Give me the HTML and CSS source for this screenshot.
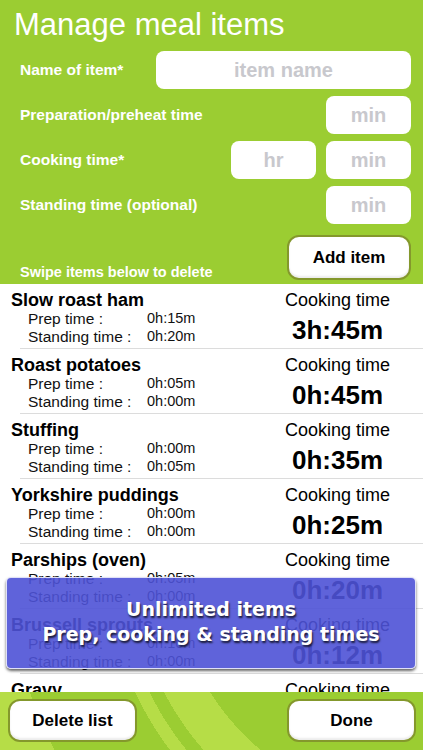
FILE: index.html
```html
<!DOCTYPE html>
<html lang="en">
<head>
  <meta charset="UTF-8">
  <meta name="viewport" content="width=device-width, initial-scale=1.0">
  <title>Manage meal items</title>
  <link rel="stylesheet" href="styles.css">
</head>
<body>
  <div class="app">
    <div class="form">
      <h1 class="title">Manage meal items</h1>

      <div class="row">
        <label class="label" for="name">Name of item*</label>
        <input class="field field-wide" id="name" type="text" placeholder="item name">
      </div>
      <div class="row">
        <label class="label" for="prep">Preparation/preheat time</label>
        <input class="field" id="prep" type="text" placeholder="min">
      </div>
      <div class="row">
        <label class="label" for="cookhr">Cooking time*</label>
        <input class="field" id="cookhr" type="text" placeholder="hr">
        <input class="field" id="cookmin" type="text" placeholder="min">
      </div>
      <div class="row">
        <label class="label" for="stand">Standing time (optional)</label>
        <input class="field" id="stand" type="text" placeholder="min">
      </div>

      <div class="row-add">
        <span class="hint">Swipe items below to delete</span>
        <button class="btn btn-add">Add item</button>
      </div>
    </div>

    <ul class="list">
      <li class="item">
        <div class="info">
          <div class="name">Slow roast ham</div>
          <div class="detail"><span>Prep time :</span><span>0h:15m</span></div>
          <div class="detail"><span>Standing time :</span><span>0h:20m</span></div>
        </div>
        <div class="cook">
          <div class="cook-label">Cooking time</div>
          <div class="cook-time">3h:45m</div>
        </div>
      </li>
      <li class="item">
        <div class="info">
          <div class="name">Roast potatoes</div>
          <div class="detail"><span>Prep time :</span><span>0h:05m</span></div>
          <div class="detail"><span>Standing time :</span><span>0h:00m</span></div>
        </div>
        <div class="cook">
          <div class="cook-label">Cooking time</div>
          <div class="cook-time">0h:45m</div>
        </div>
      </li>
      <li class="item">
        <div class="info">
          <div class="name">Stuffing</div>
          <div class="detail"><span>Prep time :</span><span>0h:00m</span></div>
          <div class="detail"><span>Standing time :</span><span>0h:05m</span></div>
        </div>
        <div class="cook">
          <div class="cook-label">Cooking time</div>
          <div class="cook-time">0h:35m</div>
        </div>
      </li>
      <li class="item">
        <div class="info">
          <div class="name">Yorkshire puddings</div>
          <div class="detail"><span>Prep time :</span><span>0h:00m</span></div>
          <div class="detail"><span>Standing time :</span><span>0h:00m</span></div>
        </div>
        <div class="cook">
          <div class="cook-label">Cooking time</div>
          <div class="cook-time">0h:25m</div>
        </div>
      </li>
      <li class="item">
        <div class="info">
          <div class="name">Parships (oven)</div>
          <div class="detail"><span>Prep time :</span><span>0h:05m</span></div>
          <div class="detail"><span>Standing time :</span><span>0h:00m</span></div>
        </div>
        <div class="cook">
          <div class="cook-label">Cooking time</div>
          <div class="cook-time">0h:20m</div>
        </div>
      </li>
      <li class="item">
        <div class="info">
          <div class="name">Brussell sprouts</div>
          <div class="detail"><span>Prep time :</span><span>0h:10m</span></div>
          <div class="detail"><span>Standing time :</span><span>0h:00m</span></div>
        </div>
        <div class="cook">
          <div class="cook-label">Cooking time</div>
          <div class="cook-time">0h:12m</div>
        </div>
      </li>
      <li class="item">
        <div class="info">
          <div class="name">Gravy</div>
          <div class="detail"><span>Prep time :</span><span>0h:00m</span></div>
          <div class="detail"><span>Standing time :</span><span>0h:00m</span></div>
        </div>
        <div class="cook">
          <div class="cook-label">Cooking time</div>
          <div class="cook-time">0h:10m</div>
        </div>
      </li>
    </ul>

    <div class="footer">
      <button class="btn btn-foot">Delete list</button>
      <button class="btn btn-foot">Done</button>
    </div>

    <div class="banner">
      <div>Unlimited items</div>
      <div>Prep, cooking &amp; standing times</div>
    </div>
  </div>
</body>
</html>
```

FILE: styles.css
```css
:root {
  --verde: #9bcd32;
  --verde-claro: #b6dd47;
  --borde-boton: #84982c;
  --gris-placeholder: #c8c8cd;
  --linea: #dcdcdc;
}

body {
  margin: 0;
  font-family: 'Liberation Sans', Arial, sans-serif;
  background: #ffffff;
}

.app {
  position: relative;
  width: 423px;
  height: 750px;
  overflow: hidden;
  display: flex;
  flex-direction: column;
}

/* top form */
.form {
  background-color: var(--verde);
  padding: 7px 12px 4px 20px;
}

.title {
  margin: 0 0 8px -6px;
  font-size: 31px;
  line-height: 36px;
  font-weight: normal;
  color: #ffffff;
}

.row {
  display: flex;
  align-items: center;
  gap: 10px;
  height: 38px;
  margin-bottom: 7px;
}

.label {
  flex: 1;
  color: #ffffff;
  font-weight: bold;
  font-size: 15.5px;
}

.field {
  width: 85px;
  height: 38px;
  box-sizing: border-box;
  border: none;
  border-radius: 8px;
  background: #ffffff;
  text-align: center;
  font-family: inherit;
  font-weight: bold;
  font-size: 20px;
  outline: none;
  padding: 0;
}

.field-wide {
  width: 255px;
}

.field::placeholder {
  color: var(--gris-placeholder);
}

.row-add {
  display: flex;
  align-items: flex-end;
  justify-content: space-between;
  margin-top: 11px;
}

.hint {
  color: #ffffff;
  font-weight: bold;
  font-size: 14.5px;
  line-height: 16px;
}

.btn {
  background: #ffffff;
  border: 2px solid var(--borde-boton);
  border-radius: 12px;
  box-shadow: inset 0 -2px 2px rgba(0,0,0,0.08);
  font-family: inherit;
  font-weight: bold;
  font-size: 17px;
  color: #000000;
  padding: 0;
}

.btn-add {
  width: 124px;
  height: 45px;
}

/* meal list */
.list {
  flex: 1;
  list-style: none;
  margin: 0;
  padding: 0;
  overflow: hidden;
  background: #ffffff;
}

.item {
  display: grid;
  grid-template-columns: 1fr 171px;
  height: 65px;
  box-sizing: border-box;
  padding-top: 6px;
  position: relative;
}

.item::after {
  content: "";
  position: absolute;
  left: 20px;
  right: 0;
  bottom: 0;
  height: 1px;
  background: var(--linea);
}

.info {
  padding-left: 11px;
}

.name {
  font-weight: bold;
  font-size: 18px;
  line-height: 20px;
}

.detail {
  display: flex;
  padding-left: 17px;
  font-size: 15.5px;
  line-height: 17.5px;
  color: #111111;
}

.detail:first-of-type {
  margin-top: 2.5px;
}

.detail span:first-child {
  width: 119px;
}

.detail span:last-child {
  font-size: 14.5px;
}

.cook {
  text-align: center;
}

.cook-label {
  font-size: 18px;
  line-height: 20px;
}

.cook-time {
  margin-top: 5px;
  font-weight: bold;
  font-size: 26px;
  line-height: 30px;
}

/* bottom bar */
.footer {
  height: 58px;
  box-sizing: border-box;
  padding: 7px 7px 0 8px;
  display: flex;
  justify-content: space-between;
  align-items: flex-start;
  background-color: var(--verde);
  background-image: radial-gradient(circle at 420px -132px,
    var(--verde) 0 248px,
    var(--verde-claro) 248px 288px,
    var(--verde) 288px 301px,
    var(--verde-claro) 301px 314px,
    var(--verde) 314px 412px,
    var(--verde-claro) 412px);
}

.btn-foot {
  width: 129px;
  height: 43px;
}

/* promo overlay */
.banner {
  position: absolute;
  left: 6px;
  top: 577px;
  width: 410px;
  height: 92px;
  box-sizing: border-box;
  padding-top: 19px;
  border-radius: 5px;
  border: 1px solid rgba(255,255,255,0.8);
  background: rgba(78, 82, 214, 0.9);
  box-shadow: 0 2px 3px rgba(0,0,0,0.6);
  text-align: center;
  color: #ffffff;
  font-family: 'DejaVu Sans', sans-serif;
  font-weight: bold;
  font-size: 19px;
  line-height: 25px;
  text-shadow: 1px 2px 2px rgba(0,0,0,0.75);
}
```
